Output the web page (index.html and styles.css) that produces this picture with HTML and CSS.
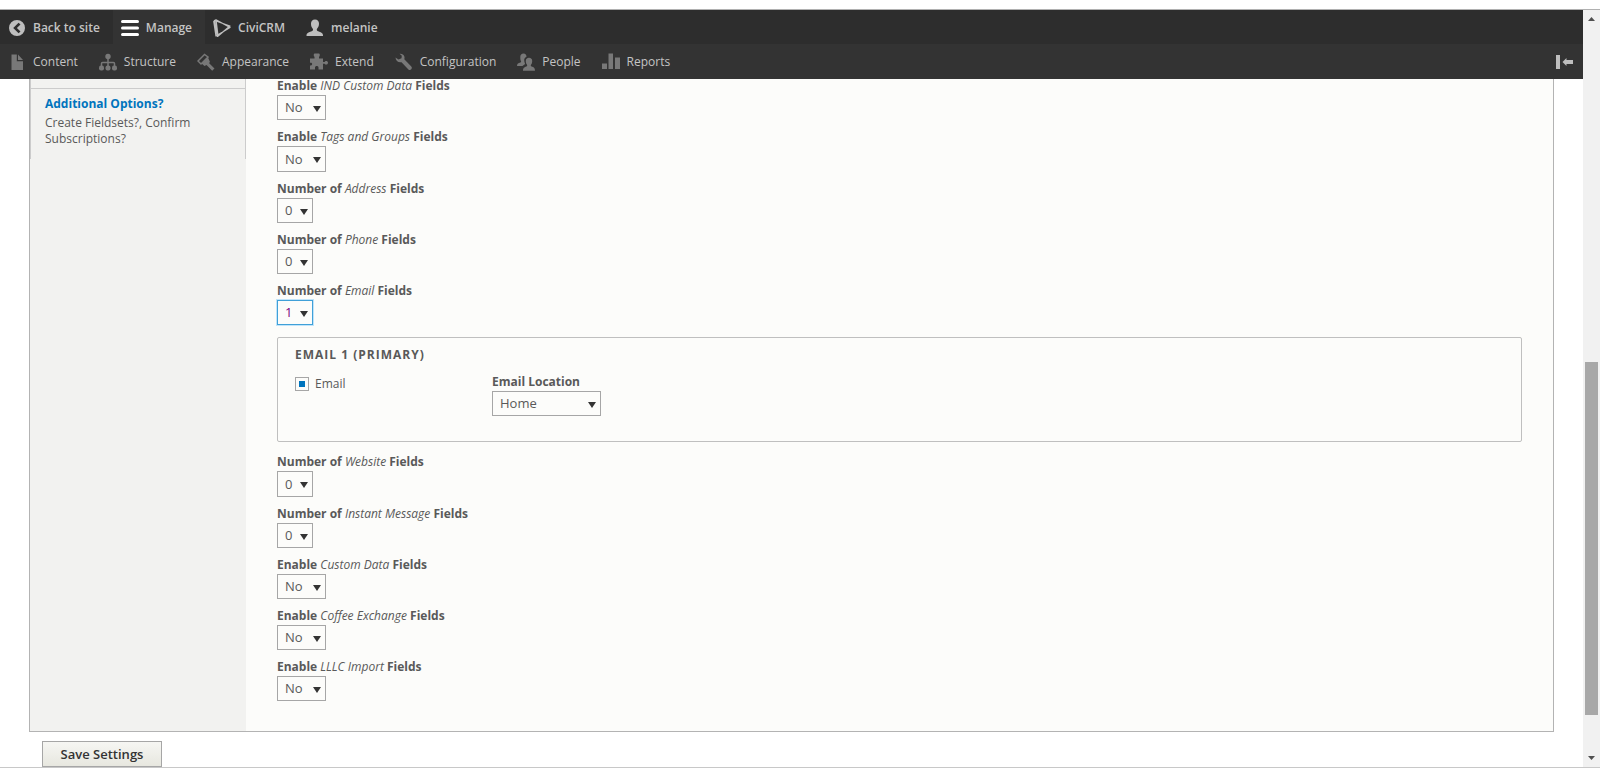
FILE: index.html
```html
<!DOCTYPE html>
<html lang="en">
<head>
<meta charset="utf-8">
<title>CiviCRM webform settings</title>
<link rel="stylesheet" href="styles.css">
</head>
<body>
<div class="window">
  <div class="page">
    <header class="toolbar">
      <nav class="bar" aria-label="Toolbar">
        <a class="item" href="#"><svg class="icon" viewBox="0 0 18 18"><path fill="#bebebe" fill-rule="evenodd" d="M9 1a8 8 0 1 0 0 16A8 8 0 0 0 9 1zM10.600 3.800l1.900 1.700L8.900 9l3.600 3.500-1.900 1.700L5.200 9z"/></svg>Back to site</a>
        <a class="item active" href="#"><svg class="icon" viewBox="0 0 18 18"><path stroke="#fff" stroke-width="3" stroke-linecap="round" d="M1.500 2.500h15M1.500 9h15M1.500 15.500h15"/></svg>Manage</a>
        <a class="item" href="#"><svg class="icon" viewBox="0 0 18 18"><path fill="none" stroke="#bebebe" stroke-width="1.300" stroke-linejoin="round" d="M1.500 1.500L17 7 4.500 17.500zM.8 2.500L3 .8 17 8.500 3 17zM3 1l2 16"/></svg>CiviCRM</a>
        <a class="item" href="#"><svg class="icon" viewBox="0 0 18 18"><path fill="#bebebe" d="M9 .5c2.600 0 4 1.700 4 4.200 0 2.300-.8 3.600-1.800 4.800-.8 1-.5 2.300.8 2.800 2.600 1 5 1.400 5 4.200v.5H.500v-.5c0-2.800 2.700-3.200 5.300-4.200 1.300-.5 1.600-1.800.8-2.800C5.600 8.300 5 7 5 4.700 5 2.200 6.400.5 9 .5z"/></svg>melanie</a>
      </nav>
      <nav class="bar tray" aria-label="Administration menu">
        <a class="item" href="#"><svg class="icon" viewBox="0 0 18 18"><path fill="#787878" d="M3.500 1.500h5.300v6.700H15V17H3.500zM10 1.500l5 5.500h-5z"/></svg>Content</a>
        <a class="item" href="#"><svg class="icon" viewBox="0 0 18 18"><g fill="#787878"><circle cx="9" cy="3.500" r="2.700"/><rect x="0" y="12.500" width="5" height="5" rx="2"/><rect x="6.500" y="12.500" width="5" height="5" rx="2"/><rect x="13" y="12.500" width="5" height="5" rx="2"/></g><path fill="none" stroke="#787878" stroke-width="1.500" d="M9 5v9M2.500 13v-2.500q0-1 1-1h11q1 0 1 1V13"/></svg>Structure</a>
        <a class="item" href="#"><svg class="icon" viewBox="0 0 18 18"><path fill="none" stroke="#787878" stroke-width="1.500" d="M7.500 1.500L1 8l3 3 7-7z"/><path fill="#787878" d="M4.500 10.500l6.500-6 2 4.500-1 1 5.500 5.500-2.300 2.300L9.500 12l-2 1z"/></svg>Appearance</a>
        <a class="item" href="#"><svg class="icon" viewBox="0 0 18 18"><path fill="#787878" d="M0 5.500h4.500V3.800C3.500 3.500 3.500.5 4.500.5h4.500c1 0 1 3 0 3.300v1.700h4V9h1.700c.3-1.500 3.300-1.500 3.300.7s-3 2.300-3.300 1h-1.700V16.500H8.500v-2c0-2-3.500-2-3.500 0v2H0v-4h1c1.500 0 1.500-2.700 0-2.700H0z"/></svg>Extend</a>
        <a class="item" href="#"><svg class="icon" viewBox="0 0 18 18"><path fill="#787878" d="M4.500.8c2-.4 4.500.7 5 3.200.1.900 0 1.600-.2 2.200l7 7.200c1.700 2-.8 4.700-2.900 3L6.500 9.200C3.500 9.900.7 8 .5 4.500l3 2 3-1.200.3-2.500z"/></svg>Configuration</a>
        <a class="item" href="#"><svg class="icon" viewBox="0 0 18 18"><path fill="#787878" d="M6.500.5c2 0 3 1.500 3 3.200-1.800.6-2.600 2.500-2.200 4.500.3 1.500.8 2 .8 2.800L5.500 13H0c0-2.500 1.500-2.700 3.300-3.500 1-.4 1-1 .5-1.800C3.300 6.700 3.300 5 3.300 3.700 3.300 2 4.500.5 6.500.5z"/><path fill="#787878" d="M12 4.800c2 0 3.200 1.300 3.200 3.100 0 1.600-.4 2.700-1.100 3.600-.6.900-.3 1.700.6 2.100 1.800.8 3.300 1 3.300 4.200H6c0-3 1.500-3.400 3.300-4.200.9-.4 1.200-1.200.6-2.100-.7-.9-1.100-2-1.100-3.600 0-1.800 1.200-3.100 3.200-3.100z"/></svg>People</a>
        <a class="item" href="#"><svg class="icon" viewBox="0 0 18 18"><path fill="#787878" d="M0 10.500h5V16H0zM6.500.5H11V16H6.500zM13 4.500h5V16h-5z"/></svg>Reports</a>
        <button class="orient" type="button" aria-label="Vertical orientation"><svg class="icon" viewBox="0 0 18 18"><path fill="#bebebe" d="M1 2h4v14H1zM7.500 9l4-4v2H18v4h-6.500v2z"/></svg></button>
      </nav>
    </header>
    <form class="content">
      <div class="panel">
        <aside class="tabs">
          <div class="tab-end"></div>
          <a class="tab" href="#"><strong class="tab-title">Additional Options?</strong><span class="tab-summary">Create Fieldsets?, Confirm Subscriptions?</span></a>
        </aside>
        <div class="pane">
          <div class="field"><label for="ind">Enable <em>IND Custom Data</em> Fields</label><span class="pick"><select id="ind"><option>No</option><option>Yes</option></select><svg class="arrow" viewBox="0 0 8 6"><path d="M0 0h8L4 6z"/></svg></span></div>
          <div class="field"><label for="tags">Enable <em>Tags and Groups</em> Fields</label><span class="pick"><select id="tags"><option>No</option><option>Yes</option></select><svg class="arrow" viewBox="0 0 8 6"><path d="M0 0h8L4 6z"/></svg></span></div>
          <div class="field"><label for="address">Number of <em>Address</em> Fields</label><span class="pick count"><select id="address"><option>0</option><option>1</option></select><svg class="arrow" viewBox="0 0 8 6"><path d="M0 0h8L4 6z"/></svg></span></div>
          <div class="field"><label for="phone">Number of <em>Phone</em> Fields</label><span class="pick count"><select id="phone"><option>0</option><option>1</option></select><svg class="arrow" viewBox="0 0 8 6"><path d="M0 0h8L4 6z"/></svg></span></div>
          <div class="field"><label for="email">Number of <em>Email</em> Fields</label><span class="pick count current"><select id="email"><option>1</option><option>0</option></select><svg class="arrow" viewBox="0 0 8 6"><path d="M0 0h8L4 6z"/></svg></span></div>
          <fieldset class="group">
            <legend>Email 1 (Primary)</legend>
            <div class="group-body">
              <label class="check" for="use-email"><input type="checkbox" id="use-email" checked>Email</label>
              <div class="field"><label for="location">Email Location</label><span class="pick wide"><select id="location"><option>Home</option><option>Work</option></select><svg class="arrow" viewBox="0 0 8 6"><path d="M0 0h8L4 6z"/></svg></span></div>
            </div>
          </fieldset>
          <div class="field"><label for="website">Number of <em>Website</em> Fields</label><span class="pick count"><select id="website"><option>0</option><option>1</option></select><svg class="arrow" viewBox="0 0 8 6"><path d="M0 0h8L4 6z"/></svg></span></div>
          <div class="field"><label for="im">Number of <em>Instant Message</em> Fields</label><span class="pick count"><select id="im"><option>0</option><option>1</option></select><svg class="arrow" viewBox="0 0 8 6"><path d="M0 0h8L4 6z"/></svg></span></div>
          <div class="field"><label for="custom">Enable <em>Custom Data</em> Fields</label><span class="pick"><select id="custom"><option>No</option><option>Yes</option></select><svg class="arrow" viewBox="0 0 8 6"><path d="M0 0h8L4 6z"/></svg></span></div>
          <div class="field"><label for="coffee">Enable <em>Coffee Exchange</em> Fields</label><span class="pick"><select id="coffee"><option>No</option><option>Yes</option></select><svg class="arrow" viewBox="0 0 8 6"><path d="M0 0h8L4 6z"/></svg></span></div>
          <div class="field"><label for="lllc">Enable <em>LLLC Import</em> Fields</label><span class="pick"><select id="lllc"><option>No</option><option>Yes</option></select><svg class="arrow" viewBox="0 0 8 6"><path d="M0 0h8L4 6z"/></svg></span></div>
        </div>
      </div>
      <button class="save" type="button">Save Settings</button>
    </form>
  </div>
  <div class="scroll" aria-hidden="true">
    <svg class="scroll-arrow" viewBox="0 0 7 4"><path d="M0 4L3.500 0 7 4z"/></svg>
    <div class="track"><div class="thumb"></div></div>
    <svg class="scroll-arrow" viewBox="0 0 7 4"><path d="M0 0L3.500 4 7 0z"/></svg>
  </div>
</div>
</body>
</html>
```
FILE: styles.css
```css
* { box-sizing: border-box; }
body {
  margin: 0;
  padding-top: 9px;
  height: 100vh;
  overflow: hidden;
  background: #fff;
  color: #595959;
  font: 13px/20px "Open Sans", "Noto Sans", sans-serif;
}
.window {
  display: flex;
  height: 100%;
  border-top: 1px solid #b0b0b0;
  border-bottom: 1px solid #c8c8c8;
}
.page { flex: 1; min-width: 0; overflow: hidden; }

.toolbar { background: #2d2d2d; }
.bar { display: flex; height: 34px; }
.bar.tray { height: 35px; background: #333; }
.item {
  display: flex;
  align-items: center;
  gap: 7px;
  padding: 1px 13px 0 8px;
  color: #c4c4c4;
  font-size: 12px;
  font-weight: 600;
  text-decoration: none;
}
.tray .item { padding-top: 0; font-weight: 400; }
.item.active { background: #333; }
.icon { display: block; flex: none; width: 18px; height: 18px; }
.orient {
  margin-left: auto;
  padding: 0 10px;
  border: 0;
  background: none;
}

.content { padding: 0 29px; }
.panel {
  display: flex;
  border: 1px solid #b3b3b3;
  border-top: 0;
  background: #fcfcfa;
}
.tabs { flex: none; width: 216px; background: #f2f2f0; }
.tab-end { height: 9px; border: 1px solid #ccc; border-width: 0 1px 0 1px; }
.tab {
  display: block;
  height: 71px;
  padding: 5px 14px;
  border: 1px solid #ccc;
  border-bottom: 0;
  font-size: 12px;
  line-height: 16px;
  color: #595959;
  text-decoration: none;
}
.tab-title { display: block; line-height: 20px; color: #0074bd; }
.tab-summary { display: block; margin-top: 1px; }

.pane { flex: 1; min-width: 0; padding: 0 31px 24px; }
.field { margin-bottom: 6px; }
.field label {
  display: block;
  height: 20px;
  line-height: 21px;
  font-size: 12px;
  font-weight: 700;
}
.field em { font-weight: 400; }
.pane > .field:first-child label { height: 16px; line-height: 14px; }
.pick { display: grid; width: 49px; }
.pick.count { width: 36px; }
.pick.wide { width: 109px; }
.pick select {
  grid-area: 1 / 1;
  width: 100%;
  height: 25px;
  margin: 0;
  padding: 0 7px 1px;
  appearance: none;
  border: 1px solid #a6a6a6;
  border-radius: 0;
  background: #fcfcfa;
  color: #595959;
  font: inherit;
}
.pane > .field:nth-child(5n + 2) select { height: 26px; }
.pick.current select {
  border-color: #40a0d8;
  color: #800080;
  box-shadow: 0 0 0 1px #c0e4fa;
}
.arrow {
  grid-area: 1 / 1;
  place-self: center end;
  width: 8px;
  height: 6px;
  margin: 2px 5px 0 0;
  fill: #333;
  pointer-events: none;
}

.group {
  margin: 12px 0 9px;
  padding: 7px 17px 25px;
  border: 1px solid #bfbfbf;
  border-radius: 2px;
}
.group legend {
  float: left;
  width: 100%;
  padding: 0;
  font-size: 12px;
  font-weight: 700;
  letter-spacing: 1px;
  text-transform: uppercase;
}
.group-body {
  clear: both;
  display: grid;
  grid-template-columns: 197px 1fr;
  padding-top: 6px;
}
.group .field { margin: 0; }
.check {
  display: flex;
  align-items: center;
  align-self: start;
  gap: 6px;
  padding-top: 3px;
  font-size: 12px;
}
.check input {
  width: 14px;
  height: 14px;
  margin: 0;
  appearance: none;
  border: 1px solid #a6a6a6;
  background: #fff;
}
.check input:checked {
  padding: 3px;
  background: #0074bd content-box;
}

.save {
  display: block;
  width: 120px;
  height: 26px;
  margin: 9px 0 0 13px;
  padding: 0;
  border: 1px solid #a6a6a6;
  background: linear-gradient(#f6f6f3, #e7e7df);
  color: #333;
  font: 600 13px/24px "Open Sans", "Noto Sans", sans-serif;
}

.scroll {
  display: flex;
  flex: none;
  flex-direction: column;
  align-items: center;
  width: 17px;
  padding: 7px 0;
  background: #f1f1f1;
}
.scroll-arrow { width: 7px; height: 4px; fill: #505050; }
.track {
  display: flex;
  flex: 1;
  flex-direction: column;
  width: 13px;
  margin: 6px 0;
}
.track::before { content: ""; flex: 335; }
.track::after { content: ""; flex: 35; }
.thumb { flex: 353; background: #a8a8a8; }
```
